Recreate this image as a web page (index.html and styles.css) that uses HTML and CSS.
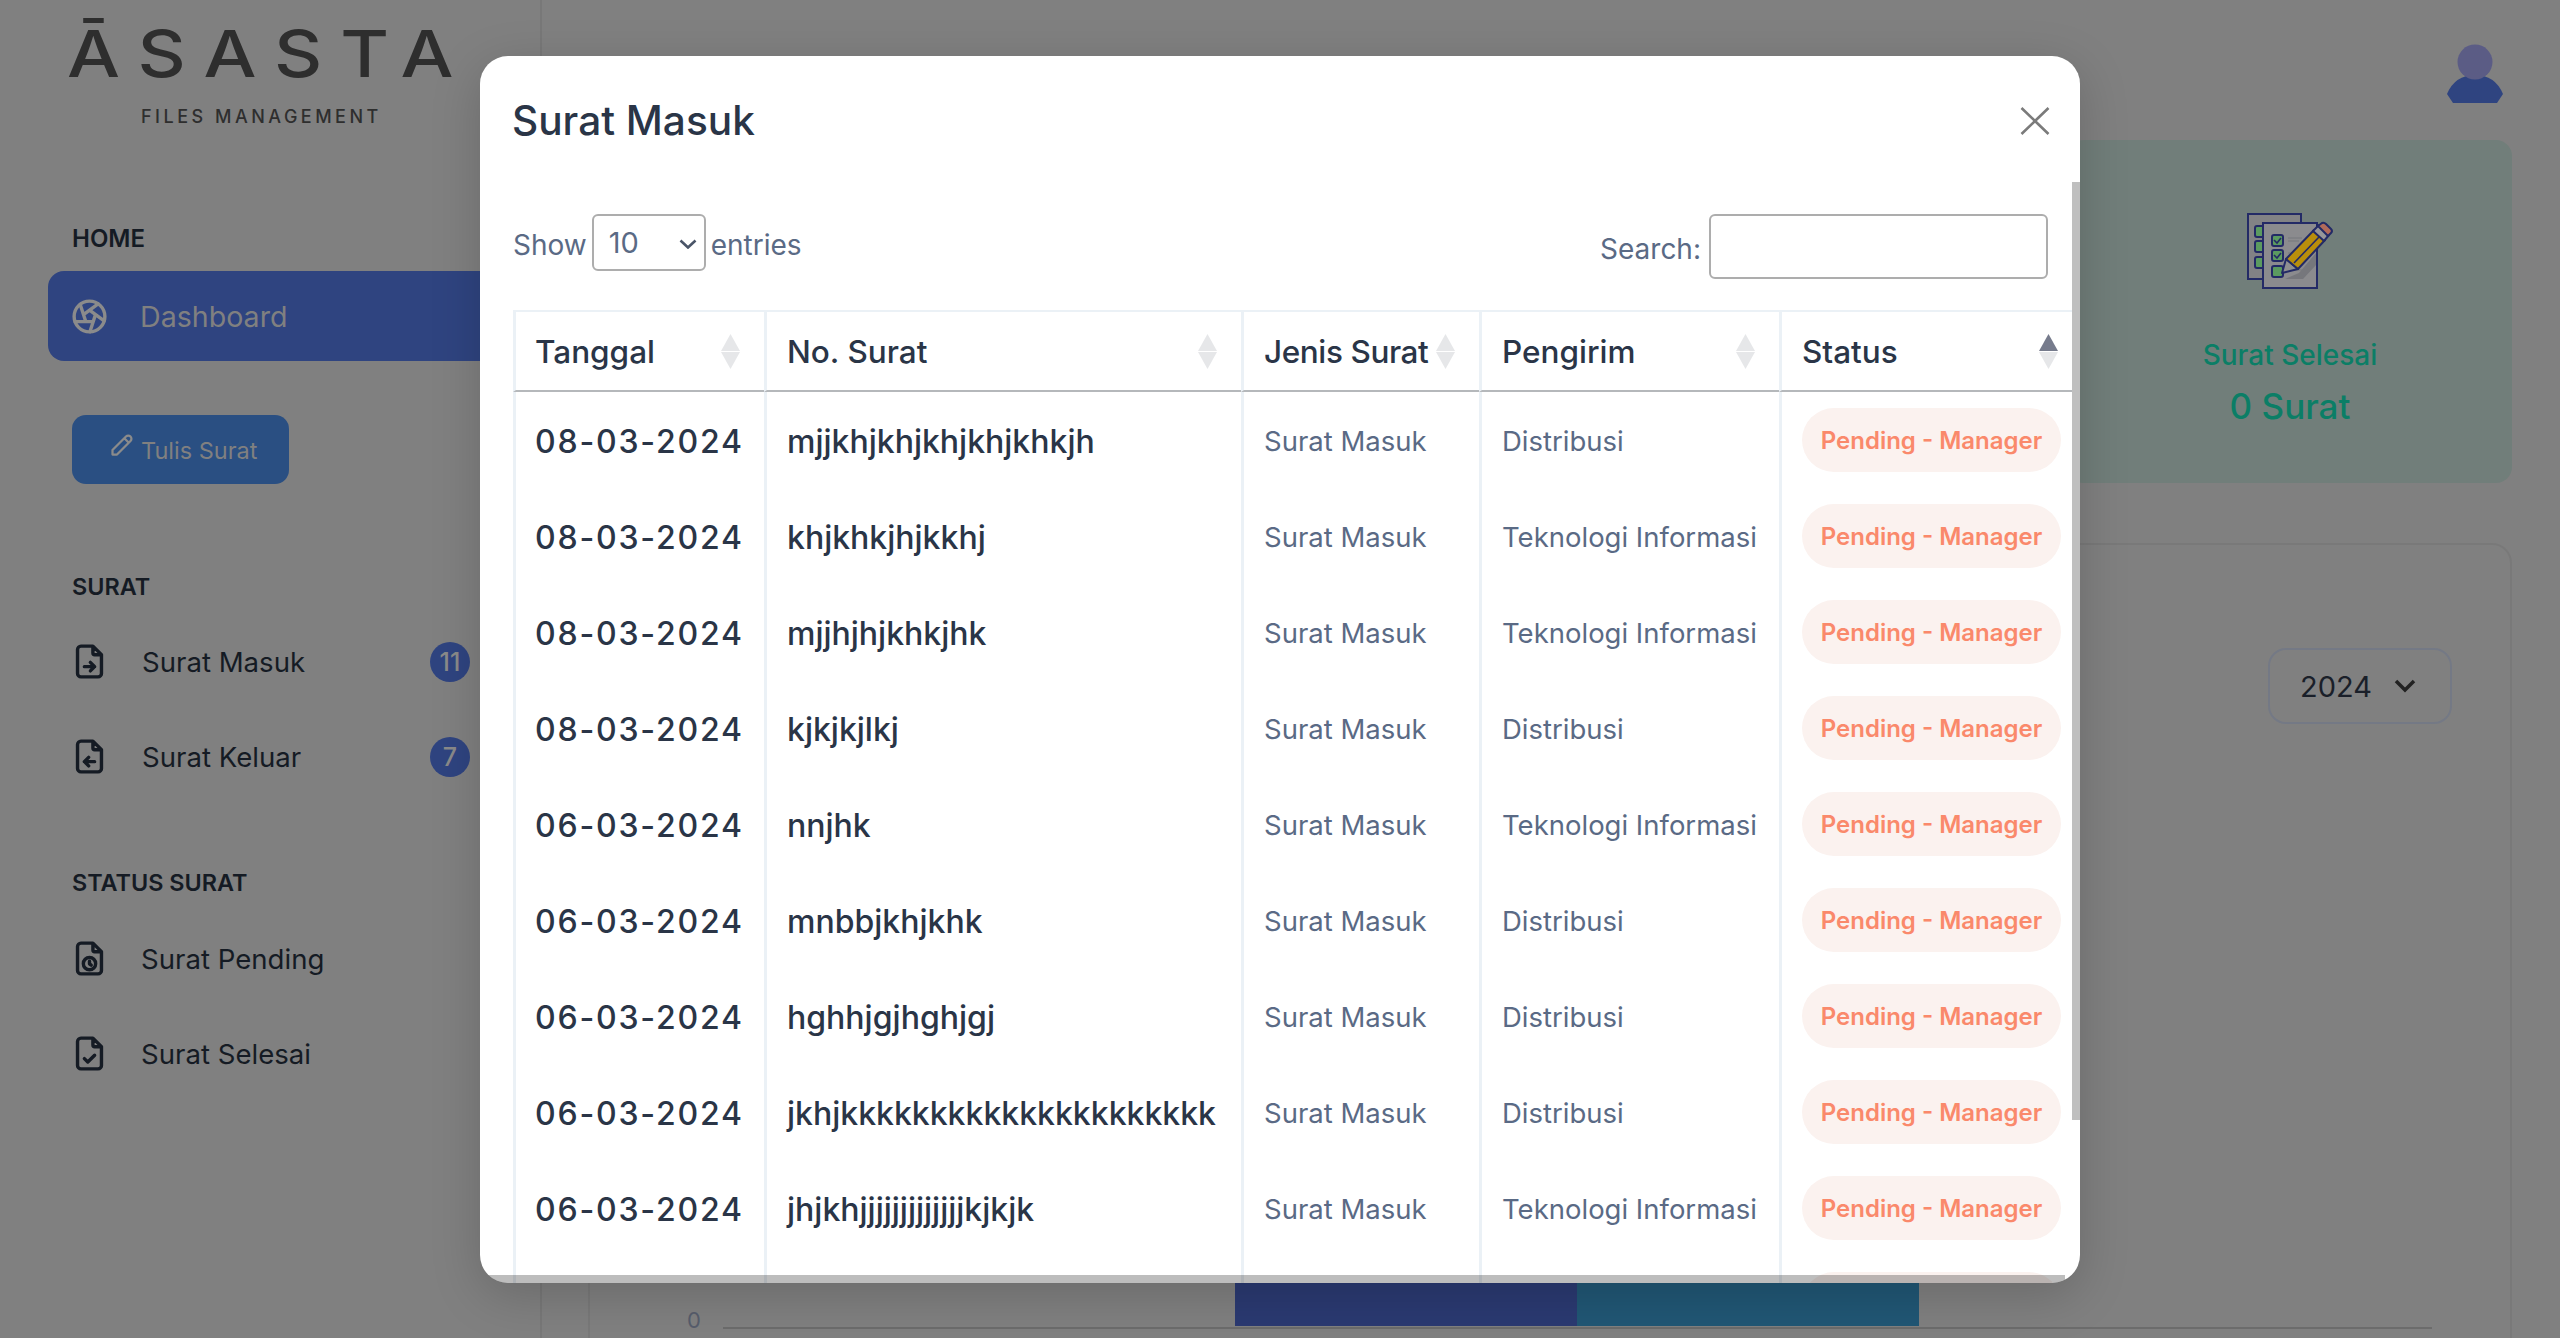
FILE: index.html
```html
<!DOCTYPE html>
<html lang="id">
<head>
<meta charset="utf-8">
<title>Asasta Files Management</title>
<link rel="stylesheet" href="styles.css">
</head>
<body>
<div class="page">
  <aside class="sidebar">
    <div class="logo">
      <div class="logo-name">ĀSASTA</div>
      <div class="logo-sub">FILES MANAGEMENT</div>
    </div>
    <div class="nav-label nav-label-home">HOME</div>
    <a class="dash-link">
      <svg class="icon" viewBox="0 0 24 24"><circle cx="12" cy="12" r="9"/><path d="M3.6 15h10.55M6.551 4.938l3.26 10.034M17.032 4.636l-8.535 6.201M20.559 14.51l-8.535 -6.201M12.257 20.916l3.261 -10.034"/></svg>
      <span>Dashboard</span>
    </a>
    <a class="write-btn">
      <svg class="write-icon" viewBox="0 0 24 24"><path d="M4 20h4L20 8a2.8 2.8 0 0 0-4-4L4 16v4M14.5 5.5l4 4"/></svg>
      <span>Tulis Surat</span>
    </a>
    <div class="nav-label nav-label-surat">SURAT</div>
    <a class="link link-badge">
      <svg class="icon" viewBox="0 0 24 24"><path d="M14 3v4a1 1 0 0 0 1 1h4M17 21h-10a2 2 0 0 1-2-2v-14a2 2 0 0 1 2-2h7l5 5v11a2 2 0 0 1-2 2zM9 15h6M12.5 17.5l2.5-2.5l-2.5-2.5"/></svg>
      <span>Surat Masuk</span><b class="badge">11</b>
    </a>
    <a class="link link-badge">
      <svg class="icon" viewBox="0 0 24 24"><path d="M14 3v4a1 1 0 0 0 1 1h4M17 21h-10a2 2 0 0 1-2-2v-14a2 2 0 0 1 2-2h7l5 5v11a2 2 0 0 1-2 2zM15 15h-6M11.5 17.5l-2.5-2.5l2.5-2.5"/></svg>
      <span>Surat Keluar</span><b class="badge">7</b>
    </a>
    <div class="nav-label nav-label-status">STATUS SURAT</div>
    <a class="link">
      <svg class="icon" viewBox="0 0 24 24"><path d="M14 3v4a1 1 0 0 0 1 1h4M17 21h-10a2 2 0 0 1-2-2v-14a2 2 0 0 1 2-2h7l5 5v11a2 2 0 0 1-2 2z"/><circle cx="12" cy="15" r="3.6"/><path d="M12 13.6v1.5l1 .8"/></svg>
      <span>Surat Pending</span>
    </a>
    <a class="link">
      <svg class="icon" viewBox="0 0 24 24"><path d="M14 3v4a1 1 0 0 0 1 1h4M17 21h-10a2 2 0 0 1-2-2v-14a2 2 0 0 1 2-2h7l5 5v11a2 2 0 0 1-2 2zM9 15l2 2l4-4"/></svg>
      <span>Surat Selesai</span>
    </a>
  </aside>

  <main class="main">
    <header class="topbar">
      <svg class="avatar" viewBox="0 0 56 60"><path class="avatar-body" d="M0 50Q8 31 28 31Q48 31 56 50L50 59H6Z"/><circle class="avatar-head" cx="28" cy="18" r="17.5"/></svg>
    </header>
    <section class="stats">
      <div class="stat">
        <svg class="stat-icon" viewBox="0 0 86 76">
          <rect class="paper-back" x="1" y="1" width="53" height="65"/>
          <rect class="tick" x="8" y="13" width="10" height="11" rx="2"/>
          <rect class="tick" x="8" y="28" width="10" height="11" rx="2"/>
          <rect class="tick" x="8" y="44" width="10" height="11" rx="2"/>
          <rect class="paper-front" x="16" y="10" width="54" height="65"/>
          <path class="shade" d="M38 66L52 60L69 40V52L56 66Z"/>
          <path class="rule" d="M41 25H55M41 28H52M41 40H48M41 57H60"/>
          <rect class="tick" x="25" y="22" width="11" height="11" rx="2"/>
          <rect class="tick" x="25" y="37" width="11" height="11" rx="2"/>
          <rect class="tick" x="25" y="53" width="11" height="11" rx="2"/>
          <path class="check" d="M27 27l3 3l4-5M27 42l3 3l4-5"/>
          <path class="pencil-tip" d="M39 46L51 56L35 60Z"/>
          <path class="pencil" d="M39 46L67 17L78 27L51 56Z"/>
          <path class="ferrule" d="M66 18L72 12L82 22L77 28Z"/>
          <path class="eraser" d="M71 13L75 10Q77 9 79 11L84 16Q86 18 84 20L81 23Z"/>
          <path class="check" d="M47 50L72 24"/>
        </svg>
        <div class="stat-title">Surat Selesai</div>
        <div class="stat-value">0 Surat</div>
      </div>
    </section>
    <section class="chart-card">
      <div class="chart-head">
        <div class="year">2024<svg class="year-chevron" viewBox="0 0 22 14"><path d="M2 2l9 9l9-9"/></svg></div>
      </div>
      <div class="plot">
        <span class="tick-label">0</span>
        <div class="axis">
          <div class="bar bar-blue"></div>
          <div class="bar bar-teal"></div>
        </div>
      </div>
    </section>
  </main>
</div>

<div class="modal">
  <header class="modal-head">
    <h2 class="modal-title">Surat Masuk</h2>
    <svg class="close" viewBox="0 0 30 28"><path d="M1.5 1L28.5 27M28.5 1L1.5 27"/></svg>
  </header>
  <div class="tools">
    <label class="length"><span class="tool-text">Show</span>
      <span class="select-wrap">
        <select class="length-select"><option>10</option><option>25</option></select>
        <svg class="select-chevron" viewBox="0 0 18 10"><path d="M1.5 1.5L9 8.5L16.5 1.5"/></svg>
      </span>
      <span class="tool-text">entries</span></label>
    <label class="search"><span class="tool-text">Search:</span> <input class="search-input" type="text"></label>
  </div>
  <table class="table">
    <colgroup><col class="c1"><col class="c2"><col class="c3"><col class="c4"><col class="c5"></colgroup>
    <thead>
      <tr>
        <th>Tanggal<svg class="sort" viewBox="0 0 19 35"><path class="off" d="M9.5 0L19 17H0Z"/><path class="off" d="M0 18H19L9.5 35Z"/></svg></th>
        <th>No. Surat<svg class="sort" viewBox="0 0 19 35"><path class="off" d="M9.5 0L19 17H0Z"/><path class="off" d="M0 18H19L9.5 35Z"/></svg></th>
        <th class="th-tight">Jenis Surat<svg class="sort" viewBox="0 0 19 35"><path class="off" d="M9.5 0L19 17H0Z"/><path class="off" d="M0 18H19L9.5 35Z"/></svg></th>
        <th>Pengirim<svg class="sort" viewBox="0 0 19 35"><path class="off" d="M9.5 0L19 17H0Z"/><path class="off" d="M0 18H19L9.5 35Z"/></svg></th>
        <th>Status<svg class="sort" viewBox="0 0 19 35"><path class="on" d="M9.5 0L19 17H0Z"/><path class="off" d="M0 18H19L9.5 35Z"/></svg></th>
      </tr>
    </thead>
    <tbody>
      <tr><td class="strong date">08-03-2024</td><td class="strong">mjjkhjkhjkhjkhjkhkjh</td><td>Surat Masuk</td><td>Distribusi</td><td><span class="pill">Pending - Manager</span></td></tr>
      <tr><td class="strong date">08-03-2024</td><td class="strong">khjkhkjhjkkhj</td><td>Surat Masuk</td><td>Teknologi Informasi</td><td><span class="pill">Pending - Manager</span></td></tr>
      <tr><td class="strong date">08-03-2024</td><td class="strong">mjjhjhjkhkjhk</td><td>Surat Masuk</td><td>Teknologi Informasi</td><td><span class="pill">Pending - Manager</span></td></tr>
      <tr><td class="strong date">08-03-2024</td><td class="strong">kjkjkjlkj</td><td>Surat Masuk</td><td>Distribusi</td><td><span class="pill">Pending - Manager</span></td></tr>
      <tr><td class="strong date">06-03-2024</td><td class="strong">nnjhk</td><td>Surat Masuk</td><td>Teknologi Informasi</td><td><span class="pill">Pending - Manager</span></td></tr>
      <tr><td class="strong date">06-03-2024</td><td class="strong">mnbbjkhjkhk</td><td>Surat Masuk</td><td>Distribusi</td><td><span class="pill">Pending - Manager</span></td></tr>
      <tr><td class="strong date">06-03-2024</td><td class="strong">hghhjgjhghjgj</td><td>Surat Masuk</td><td>Distribusi</td><td><span class="pill">Pending - Manager</span></td></tr>
      <tr><td class="strong date">06-03-2024</td><td class="strong">jkhjkkkkkkkkkkkkkkkkkkkkk</td><td>Surat Masuk</td><td>Distribusi</td><td><span class="pill">Pending - Manager</span></td></tr>
      <tr><td class="strong date">06-03-2024</td><td class="strong">jhjkhjjjjjjjjjjjjjkjkjk</td><td>Surat Masuk</td><td>Teknologi Informasi</td><td><span class="pill">Pending - Manager</span></td></tr>
      <tr><td></td><td></td><td></td><td></td><td><span class="pill"></span></td></tr>
    </tbody>
  </table>
  <div class="scroll-v"></div>
  <div class="scroll-h"></div>
</div>
</body>
</html>
```

FILE: styles.css
```css
* { box-sizing: border-box; }
html, body { margin: 0; height: 100%; }
body {
  height: 1338px;
  overflow: hidden;
  position: relative;
  background: #808080;
  font-family: Inter, "Noto Sans", sans-serif;
  color: #151b24;
}
.page { display: flex; height: 1338px; overflow: hidden; }

/* Sidebar */
.sidebar {
  width: 542px;
  flex: none;
  border-right: 2px solid #787878;
}
.logo { height: 224px; padding: 12px 0 0 67px; color: #2e2e2e; }
.logo-name {
  font-size: 65px;
  line-height: 84px;
  font-weight: 500;
  letter-spacing: 15.6px;
  white-space: nowrap;
  transform: scaleX(1.15);
  transform-origin: left center;
}
.logo-sub {
  margin: 11px 0 0 74px;
  font-size: 18px;
  line-height: 20px;
  font-weight: 500;
  letter-spacing: 3.5px;
  white-space: nowrap;
}
.nav-label {
  height: 30px;
  padding-left: 72px;
  font-size: 23.4px;
  line-height: 30px;
  font-weight: 600;
  color: #151b24;
}
.nav-label-home { margin-bottom: 17px; font-size: 24px; }
.nav-label-surat { margin-top: 88px; margin-bottom: 12px; }
.nav-label-status { margin-top: 64px; margin-bottom: 13px; }
.dash-link {
  display: flex;
  align-items: center;
  gap: 30px;
  height: 90px;
  margin-left: 48px;
  padding-left: 21px;
  background: #2f4480;
  border-radius: 16px 0 0 16px;
  color: #808080;
  font-size: 28.6px;
}
.icon {
  width: 41px;
  height: 41px;
  flex: none;
  fill: none;
  stroke: currentColor;
  stroke-width: 2;
  stroke-linecap: round;
  stroke-linejoin: round;
}
.dash-link .icon { stroke: #8b8b8b; }
.write-btn {
  display: flex;
  align-items: center;
  gap: 6px;
  width: 217px;
  height: 69px;
  margin: 54px 0 0 72px;
  padding: 2px 0 0 36px;
  background: #2a4f82;
  border-radius: 14px;
  color: #808080;
  font-size: 23.5px;
}
.write-icon {
  width: 27px;
  height: 27px;
  margin-top: -10px;
  fill: none;
  stroke: #8b8b8b;
  stroke-width: 2;
  stroke-linecap: round;
  stroke-linejoin: round;
}
.link {
  display: flex;
  align-items: center;
  gap: 31px;
  height: 95px;
  padding: 0 70px 0 69px;
  font-size: 27.6px;
  color: #151b24;
}
.link-badge { gap: 32px; }
.badge {
  display: flex;
  align-items: center;
  justify-content: center;
  width: 40px;
  height: 40px;
  margin-left: auto;
  border-radius: 50%;
  background: #2f4480;
  color: #8a8a8a;
  font-size: 25px;
  font-weight: 500;
}

/* Main */
.main {
  flex: 1;
  min-width: 0;
  padding: 0 48px 0 46px;
  display: flex;
  flex-direction: column;
}
.topbar {
  height: 140px;
  flex: none;
  display: flex;
  justify-content: flex-end;
  padding: 44px 9px 0 0;
}
.avatar { width: 56px; height: 60px; }
.avatar-body { fill: #2f4480; }
.avatar-head { fill: #5b5c85; }
.stats { display: flex; justify-content: flex-end; height: 343px; flex: none; }
.stat {
  width: 444px;
  background: #717e7a;
  border-radius: 16px;
  display: flex;
  flex-direction: column;
  align-items: center;
  padding-top: 73px;
  color: #0b7e66;
}
.stat-icon { width: 86px; height: 76px; }
.stat-title { margin-top: 48px; font-size: 28px; line-height: 36px; font-weight: 500; }
.stat-value { margin-top: 10px; font-size: 35px; line-height: 46px; font-weight: 500; }
.paper-back { fill: #828285; stroke: #232a66; stroke-width: 2; }
.paper-front { fill: #8b8b8e; stroke: #232a66; stroke-width: 2; }
.tick { fill: #5b9a60; stroke: #232a66; stroke-width: 2; }
.check { fill: none; stroke: #232a66; stroke-width: 1.6; }
.shade { fill: #76777c; }
.rule { fill: none; stroke: #77787c; stroke-width: 1.2; }
.pencil { fill: #b98e0c; stroke: #232a66; stroke-width: 2; stroke-linejoin: round; }
.pencil-tip { fill: #8f8f90; stroke: #232a66; stroke-width: 2; stroke-linejoin: round; }
.ferrule { fill: #96969a; stroke: #232a66; stroke-width: 2; stroke-linejoin: round; }
.eraser { fill: #b26a5a; stroke: #232a66; stroke-width: 2; stroke-linejoin: round; }
.chart-card {
  flex: none;
  height: 850px;
  margin-top: 60px;
  border: 2px solid #797979;
  border-radius: 20px;
  padding: 103px 58px 0 97px;
}
.chart-head { display: flex; justify-content: flex-end; height: 76px; }
.year {
  display: flex;
  align-items: center;
  gap: 22px;
  width: 184px;
  height: 76px;
  padding-left: 30px;
  border: 2px solid #747985;
  border-radius: 18px;
  font-size: 29px;
  color: #1a1f29;
}
.year-chevron { width: 22px; height: 14px; fill: none; stroke: #222; stroke-width: 3.5; }
.plot { display: flex; align-items: flex-end; height: 605px; margin-right: 20px; }
.tick-label { width: 36px; flex: none; font-size: 22px; line-height: 26px; color: #575d6c; margin-bottom: -4px; }
.axis {
  flex: 1;
  display: flex;
  align-items: flex-end;
  height: 300px;
  padding: 0 0 1px 512px;
  border-bottom: 2px solid #6c6c6c;
}
.bar { width: 342px; height: 250px; }
.bar-blue { background: #2b3a72; }
.bar-teal { background: #215775; }

/* Modal */
.modal {
  position: absolute;
  left: 480px;
  top: 56px;
  width: 1600px;
  height: 1227px;
  background: #fff;
  border-radius: 28px;
  overflow: hidden;
  color: #2a3547;
  box-shadow: 0 12px 50px rgba(0, 0, 0, .18);
}
.modal-head {
  display: flex;
  align-items: center;
  justify-content: space-between;
  height: 130px;
  padding: 0 30px 0 32px;
}
.modal-title { margin: 0; font-size: 40.6px; line-height: 50px; font-weight: 500; color: #2a3547; }
.close { width: 30px; height: 28px; fill: none; stroke: #7b7b7b; stroke-width: 2.6; }
.tools {
  display: flex;
  justify-content: space-between;
  align-items: flex-start;
  height: 65px;
  margin-top: 28px;
  padding: 0 32px 0 33px;
  color: #5a6a85;
  font-size: 28px;
}
.tool-text { position: relative; top: 2px; }
.length { display: flex; align-items: center; gap: 5px; height: 57px; }
.select-wrap { position: relative; display: block; width: 114px; height: 57px; }
.length-select {
  appearance: none;
  -webkit-appearance: none;
  display: block;
  width: 114px;
  height: 57px;
  padding: 0 10px 0 15px;
  border: 2px solid #adadad;
  border-radius: 6px;
  background: #fff;
  color: #5a6a85;
  font: inherit;
  font-size: 29px;
}
.select-chevron {
  position: absolute;
  right: 9px;
  top: 25px;
  width: 18px;
  height: 10px;
  fill: none;
  stroke: #4a5568;
  stroke-width: 2.6;
  pointer-events: none;
}
.search { display: flex; align-items: center; gap: 8px; height: 65px; }
.search-input {
  width: 339px;
  height: 65px;
  border: 2px solid #adadad;
  border-radius: 6px;
  background: #fff;
}
.table {
  width: 1569px;
  margin: 31px 0 0 33px;
  border-collapse: separate;
  border-spacing: 0;
  table-layout: fixed;
}
.c1 { width: 251px; }
.c2 { width: 477px; }
.c3 { width: 238px; }
.c4 { width: 300px; }
.c5 { width: 303px; }
.table th {
  position: relative;
  height: 82px;
  padding: 0 0 0 20px;
  text-align: left;
  font-size: 31.5px;
  font-weight: 500;
  color: #2a3547;
  border-top: 2px solid #ebf1f6;
  border-left: 3px solid #ebf1f6;
  border-bottom: 2px solid #b5b8bb;
  white-space: nowrap;
}
.table th:first-child { padding-left: 19px; }
.table th.th-tight { letter-spacing: -.4px; }
.table td {
  height: 96px;
  padding: 2px 0 0 20px;
  border-left: 3px solid #ebf1f6;
  font-size: 27.5px;
  color: #5a6a85;
  white-space: nowrap;
}
.table td:first-child { padding-left: 19px; }
.table td:last-child { padding-top: 0; }
.table td.strong { font-size: 32px; font-weight: 500; color: #2a3547; }
.table td.date { letter-spacing: 1.8px; }
.sort { position: absolute; right: 24px; top: 22px; width: 19px; height: 35px; }
.sort .off { fill: #e6e7e9; }
.sort .on { fill: #767b8c; }
.pill {
  display: flex;
  align-items: center;
  justify-content: center;
  width: 259px;
  height: 64px;
  margin-top: -1px;
  padding-top: 2px;
  border-radius: 32px;
  background: #fbf2ef;
  color: #fa896b;
  font-size: 24px;
  font-weight: 600;
}
.scroll-v {
  position: absolute;
  right: 0;
  top: 126px;
  width: 8px;
  height: 938px;
  background: #bfbfbf;
}
.scroll-h {
  position: absolute;
  left: 0;
  bottom: 0;
  width: 1585px;
  height: 8px;
  background: rgba(0, 0, 0, .26);
}
```
